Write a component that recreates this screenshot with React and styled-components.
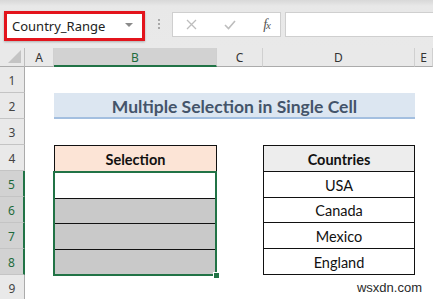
import React from 'react';
import styled, { createGlobalStyle } from 'styled-components';

const GlobalStyle = createGlobalStyle`
  html, body {
    margin: 0;
    padding: 0;
    background: #ffffff;
    overflow: hidden;
  }
  body {
    font-family: Lato, "Open Sans", sans-serif;
  }
`;

const Window = styled.div`
  width: 433px;
  height: 299px;
  position: relative;
  overflow: hidden;
  background: #ffffff;
`;

/* formula bar */
const TopBar = styled.div`
  height: 48px;
  display: flex;
  align-items: flex-start;
  padding: 11px 0 0 4px;
  box-sizing: border-box;
  background: linear-gradient(#d8d8d8 0px, #e8e8e8 6px, #e9e9e9 100%);
`;

const NameBox = styled.div`
  width: 141px;
  height: 30px;
  box-sizing: border-box;
  border: 3px solid #e3141c;
  background: #ffffff;
  display: flex;
  align-items: center;
  justify-content: space-between;
  padding: 0 9px 0 5px;
  font-family: "Noto Sans", "Open Sans", sans-serif;
  font-size: 13px;
  color: #222;
  box-shadow: 0 1px 2px rgba(0, 0, 0, 0.25);
`;

const Caret = styled.span`
  width: 0;
  height: 0;
  border-left: 4px solid transparent;
  border-right: 4px solid transparent;
  border-top: 4px solid #8a8a8a;
  margin-top: -3px;
`;

const Grip = styled.div`
  width: 27px;
  height: 26px;
  display: flex;
  flex-direction: column;
  align-items: center;
  justify-content: center;
  gap: 2px;
  & > span {
    width: 2px;
    height: 2px;
    background: #a8a8a8;
  }
`;

const FxButtons = styled.div`
  width: 109px;
  height: 25px;
  margin-top: 1px;
  box-sizing: border-box;
  border: 1px solid #cfcfcf;
  background: #ffffff;
  display: flex;
  align-items: center;
  justify-content: space-between;
  padding: 0 10px 0 13px;
`;

const Fx = styled.span`
  font-family: "Liberation Serif", serif;
  font-style: italic;
  font-size: 14px;
  color: #555;
  letter-spacing: -1px;
  & > small {
    font-size: 11px;
  }
`;

const FormulaInput = styled.div`
  flex: 1;
  height: 25px;
  margin: 1px 0 0 4px;
  box-sizing: border-box;
  border: 1px solid #cfcfcf;
  border-right: none;
  background: #ffffff;
`;

/* sheet */
const Sheet = styled.div`
  display: grid;
  grid-template-columns: 25px 29px 163px 46px 152px 1fr;
  grid-template-rows: 19px repeat(9, 26px);
`;

const Corner = styled.div`
  position: relative;
  background: #e9e9e9;
  border-right: 1px solid #bdbdbd;
  border-bottom: 1px solid #ababab;
  box-sizing: border-box;
  &::after {
    content: '';
    position: absolute;
    right: 3px;
    bottom: 3px;
    border-left: 13px solid transparent;
    border-bottom: 13px solid #c4c4c4;
  }
`;

const ColHead = styled.div`
  display: flex;
  align-items: center;
  justify-content: center;
  box-sizing: border-box;
  font-family: "Noto Sans", "Open Sans", sans-serif;
  font-size: 12px;
  color: ${({ $selected }) => ($selected ? '#1e6b3c' : '#333')};
  background: ${({ $selected }) => ($selected ? '#d2d2d2' : '#e9e9e9')};
  border-right: 1px solid #d0d0d0;
  border-bottom: ${({ $selected }) => ($selected ? '2px solid #217346' : '1px solid #ababab')};
  padding-top: ${({ $selected }) => ($selected ? '1px' : '0')};
`;

const RowHead = styled.div`
  display: flex;
  align-items: center;
  justify-content: center;
  box-sizing: border-box;
  font-family: "Noto Sans", "Open Sans", sans-serif;
  font-size: 12px;
  padding-top: 2px;
  color: ${({ $selected }) => ($selected ? '#1e6b3c' : '#444')};
  background: ${({ $selected }) => ($selected ? '#d2d2d2' : '#e9e9e9')};
  border-bottom: 1px solid #c4c4c4;
  border-right: ${({ $selected }) => ($selected ? '2px solid #217346' : '1px solid #ababab')};
`;

const Cell = styled.div`
  background: #ffffff;
`;

const Title = styled.div`
  grid-row: 3;
  grid-column: 3 / span 3;
  background: #dce6f1;
  border-bottom: 2px solid #a3bfe0;
  display: flex;
  align-items: center;
  justify-content: center;
  font-weight: 700;
  font-size: 17.5px;
  color: #44546a;
  padding-top: 2px;
`;

const HeadCell = styled.div`
  grid-row: 5;
  grid-column: 3;
  box-sizing: border-box;
  border: 1px solid #111;
  border-bottom: none;
  background: #fce4d6;
  display: flex;
  align-items: center;
  justify-content: center;
  font-weight: 700;
  font-size: 14.5px;
  color: #111;
  padding-top: 2px;
`;

const SelectionBlock = styled.div`
  grid-row: 6 / span 4;
  grid-column: 3;
  position: relative;
  margin: 0 0 -1px -1px;
  box-sizing: border-box;
  border: 2px solid #217346;
  display: flex;
  flex-direction: column;
`;

const SelRow = styled.div`
  flex: 1;
  background: ${({ $filled }) => ($filled ? '#c9c9c9' : '#ffffff')};
  border-top: ${({ $first }) => ($first ? 'none' : '1px solid #111')};
`;

const FillHandle = styled.span`
  position: absolute;
  right: -5px;
  bottom: -5px;
  width: 5px;
  height: 5px;
  background: #217346;
  border: 1px solid #ffffff;
`;

const Countries = styled.div`
  grid-row: 5 / span 5;
  grid-column: 5;
  box-sizing: border-box;
  border: 1px solid #111;
  display: flex;
  flex-direction: column;
`;

const CountryRow = styled.div`
  flex: 1;
  display: flex;
  align-items: center;
  justify-content: center;
  padding-top: 2px;
  font-size: 14.5px;
  color: #111;
  font-weight: ${({ $head }) => ($head ? 700 : 400)};
  background: ${({ $head }) => ($head ? '#ededed' : '#ffffff')};
  border-top: ${({ $first }) => ($first ? 'none' : '1px solid #111')};
`;

const Watermark = styled.div`
  position: absolute;
  right: 11px;
  bottom: 4px;
  font-family: "Liberation Sans", Arial, sans-serif;
  font-size: 13px;
  color: #2a2a2a;
`;

const columns = ['A', 'B', 'C', 'D', 'E'];
const selectedRows = [5, 6, 7, 8];

// cells taken by the title, the two tables and the selection
const covered = (row, col) => {
  if (row === 2 && col >= 1 && col <= 3) return true;
  if (col === 1 && row >= 4 && row <= 8) return true;
  if (col === 3 && row >= 4 && row <= 8) return true;
  return false;
};

const XIcon = () => (
  <svg width="11" height="11" viewBox="0 0 11 11">
    <path d="M1 1 L10 10 M10 1 L1 10" stroke="#bdbdbd" strokeWidth="1.3" fill="none" />
  </svg>
);

const CheckIcon = () => (
  <svg width="12" height="10" viewBox="0 0 12 10">
    <path d="M1 5 L4.5 8.5 L11 1" stroke="#bdbdbd" strokeWidth="1.6" fill="none" />
  </svg>
);

export default function App() {
  const rows = [];
  for (let r = 1; r <= 9; r++) {
    rows.push(
      <RowHead key={`h${r}`} $selected={selectedRows.includes(r)}>
        {r}
      </RowHead>
    );
    columns.forEach((c, i) => {
      if (!covered(r, i)) rows.push(<Cell key={`${c}${r}`} />);
    });
  }

  return (
    <Window>
      <GlobalStyle />
      <TopBar>
        <NameBox>
          Country_Range
          <Caret />
        </NameBox>
        <Grip>
          <span />
          <span />
          <span />
        </Grip>
        <FxButtons>
          <XIcon />
          <CheckIcon />
          <Fx>
            f<small>x</small>
          </Fx>
        </FxButtons>
        <FormulaInput />
      </TopBar>

      <Sheet>
        <Corner />
        {columns.map((c) => (
          <ColHead key={c} $selected={c === 'B'}>
            {c}
          </ColHead>
        ))}
        <Title>Multiple Selection in Single Cell</Title>
        <HeadCell>Selection</HeadCell>
        <SelectionBlock>
          <SelRow $first />
          <SelRow $filled />
          <SelRow $filled />
          <SelRow $filled />
          <FillHandle />
        </SelectionBlock>
        <Countries>
          <CountryRow $head $first>Countries</CountryRow>
          <CountryRow>USA</CountryRow>
          <CountryRow>Canada</CountryRow>
          <CountryRow>Mexico</CountryRow>
          <CountryRow>England</CountryRow>
        </Countries>
        {rows}
      </Sheet>
      <Watermark>wsxdn.com</Watermark>
    </Window>
  );
}
